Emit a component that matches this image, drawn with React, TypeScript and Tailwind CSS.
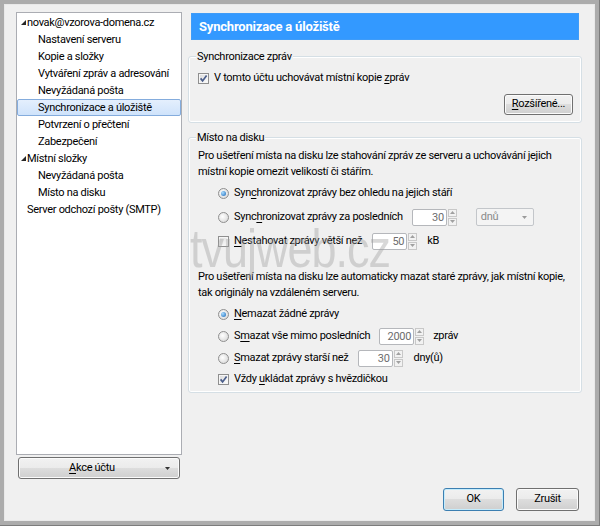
import React from "react";

const Check = ({ checked }: { checked?: boolean }) => (
  <span className="w-[11px] h-[11px] shrink-0 border border-[#8f8f8f] bg-[linear-gradient(135deg,#d9d9d9,#ffffff)] shadow-[inset_0_0_0_1px_#f6f6f6] flex items-center justify-center">
    {checked && (
      <svg width="9" height="9" viewBox="0 0 9 9">
        <path d="M1.6 4.4 L3.6 6.9 L7.6 1.6" stroke="#4a5d8a" strokeWidth="1.7" fill="none" />
      </svg>
    )}
  </span>
);

const Radio = ({ checked }: { checked?: boolean }) => (
  <span className="w-[11px] h-[11px] shrink-0 rounded-full border border-[#8f8f8f] bg-[radial-gradient(circle_at_40%_40%,#ffffff,#d2d2d2)] flex items-center justify-center">
    {checked && <span className="w-[5px] h-[5px] rounded-full bg-[radial-gradient(circle_at_35%_35%,#a8dcff,#1766b8)]" />}
  </span>
);

const Spin = ({ value }: { value: string }) => (
  <div className="flex items-center gap-[1px]">
    <div className="h-[17px] w-[35px] border border-[#b5b7bb] rounded-[2px] bg-white text-right pr-[2px] text-[#6d6d6d] leading-[15px]">{value}</div>
    <div className="flex flex-col gap-[1px]">
      <span className="w-[9px] h-[8px] border border-[#c8c8c8] bg-[#f2f2f2] flex items-center justify-center">
        <svg width="5" height="3" viewBox="0 0 5 3"><path d="M0 3 L2.5 0 L5 3 Z" fill="#a0a0a0" /></svg>
      </span>
      <span className="w-[9px] h-[8px] border border-[#c8c8c8] bg-[#f2f2f2] flex items-center justify-center">
        <svg width="5" height="3" viewBox="0 0 5 3"><path d="M0 0 L2.5 3 L5 0 Z" fill="#a0a0a0" /></svg>
      </span>
    </div>
  </div>
);

const btn =
  "rounded-[3px] border border-[#707070] bg-[linear-gradient(#f2f2f2_0%,#ebebeb_50%,#dddddd_50%,#cfcfcf_100%)] shadow-[inset_0_0_0_1px_#fbfbfb] flex items-center justify-center text-black";

const Tri = () => (
  <svg width="5" height="5" viewBox="0 0 5 5" className="shrink-0">
    <path d="M5 0 L5 5 L0 5 Z" fill="#262626" />
  </svg>
);

export default function App() {
  const tree: { label: string; level: number; exp?: boolean; sel?: boolean }[] = [
    { label: "novak@vzorova-domena.cz", level: 0, exp: true },
    { label: "Nastavení serveru", level: 1 },
    { label: "Kopie a složky", level: 1 },
    { label: "Vytváření zpráv a adresování", level: 1 },
    { label: "Nevyžádaná pošta", level: 1 },
    { label: "Synchronizace a úložiště", level: 1, sel: true },
    { label: "Potvrzení o přečtení", level: 1 },
    { label: "Zabezpečení", level: 1 },
    { label: "Místní složky", level: 0, exp: true },
    { label: "Nevyžádaná pošta", level: 1 },
    { label: "Místo na disku", level: 1 },
    { label: "Server odchozí pošty (SMTP)", level: 0 },
  ];

  return (
    <div className="relative w-[600px] h-[526px] bg-[#acacac] border-r border-b border-[#7c7c7c] pt-[4px] pl-[4px] pr-[4px] pb-[4px] font-['Roboto','Liberation_Sans',sans-serif] text-[11px] tracking-[-0.3px] text-black whitespace-nowrap">
      <div className="h-full border border-[#e9e9e9] bg-[#f0f0f0] flex gap-[6px] pt-[7px] pl-[11px] pr-[11px]">
        {/* left column */}
        <div className="w-[166px] flex flex-col">
          <div className="h-[443px] border border-[#abadb3] bg-white pt-[1px]">
            {tree.map((t, i) => (
              <div
                key={i}
                className={
                  "h-[17px] flex items-center leading-[17px] " +
                  (t.sel
                    ? "rounded-[2px] border border-[#84acdd] bg-[linear-gradient(#e4effd,#cfe3fb)]"
                    : "border border-transparent")
                }
              >
                {t.level === 0 ? (
                  <span className="flex items-center">
                    <span className="w-[8px] flex justify-end">{t.exp && <Tri />}</span>
                    <span className="pl-[1px]">{t.label}</span>
                  </span>
                ) : (
                  <span className="pl-[20px]">{t.label}</span>
                )}
              </div>
            ))}
          </div>
          <div className={"mt-[2px] ml-[2px] w-[162px] h-[22px] " + btn + " !justify-start"}>
            <span className="flex-1 text-center">
              <u className="underline-offset-2">A</u>kce účtu
            </span>
            <svg width="5" height="3" viewBox="0 0 5 3" className="mr-[9px]"><path d="M0 0 L2.5 3 L5 0 Z" fill="#333" /></svg>
          </div>
        </div>

        {/* right column */}
        <div className="w-[394px] flex flex-col">
          <div className="mt-[1px] mx-[3px] h-[27px] bg-[#3399ff] border border-[#3f9cf8] flex items-center pl-[7px] text-white font-bold text-[13px] tracking-[-0.2px]">
            Synchronizace a úložiště
          </div>

          {/* group 1 */}
          <div className="relative mt-[16px] h-[67px] rounded-[3px] border border-[#d5dfe5] shadow-[inset_0_0_0_1px_#ffffff] pl-[9px] pr-[8px] pt-[14px]">
            <span className="absolute -top-[8px] left-[7px] px-[1px] bg-[#f0f0f0] leading-[15px]">Synchronizace zpráv</span>
            <div className="h-[14px] flex items-center gap-[5px]">
              <Check checked />
              <span>
                V tomto účtu uchovávat místní kopie <u className="underline-offset-2">z</u>práv
              </span>
            </div>
            <div className="mt-[9px] flex justify-end">
              <div className={"w-[69px] h-[21px] " + btn}>
                <span>
                  <u className="underline-offset-2">R</u>ozšířené...
                </span>
              </div>
            </div>
          </div>

          {/* group 2 */}
          <div className="relative mt-[14px] h-[256px] rounded-[3px] border border-[#d5dfe5] shadow-[inset_0_0_0_1px_#ffffff] pl-[9px] pr-[8px] pt-[10px]">
            <span className="absolute -top-[8px] left-[7px] px-[1px] bg-[#f0f0f0] leading-[15px]">Místo na disku</span>
            <p className="leading-[16px]">
              Pro ušetření místa na disku lze stahování zpráv ze serveru a uchovávání jejich
              <br />
              místní kopie omezit velikostí či stářím.
            </p>
            <div className="mt-[1px] pl-[20px]">
              <div className="h-[24px] flex items-center gap-[5px]">
                <Radio checked />
                <span>
                  Syn<u className="underline-offset-2">c</u>hronizovat zprávy bez ohledu na jejich stáří
                </span>
              </div>
              <div className="h-[24px] flex items-center gap-[5px]">
                <Radio />
                <span>
                  Sync<u className="underline-offset-2">h</u>ronizovat zprávy za posledních
                </span>
                <span className="ml-[4px]">
                  <Spin value="30" />
                </span>
                <div className="ml-[14px] h-[18px] w-[58px] rounded-[2px] border border-[#c3c6ca] bg-[#f4f4f4] flex items-center justify-between pl-[4px] pr-[6px] text-[#8a8a8a]">
                  <span>dnů</span>
                  <svg width="5" height="3" viewBox="0 0 5 3"><path d="M0 0 L2.5 3 L5 0 Z" fill="#9a9a9a" /></svg>
                </div>
              </div>
              <div className="h-[24px] flex items-center gap-[5px]">
                <Check />
                <span>
                  <u className="underline-offset-2">N</u>estahovat zprávy větší než
                </span>
                <span className="ml-[5px]">
                  <Spin value="50" />
                </span>
                <span className="ml-[5px]">kB</span>
              </div>
            </div>
            <p className="mt-[16px] leading-[16px]">
              Pro ušetření místa na disku lze automaticky mazat staré zprávy, jak místní kopie,
              <br />
              tak originály na vzdáleném serveru.
            </p>
            <div className="mt-[3px] pl-[20px]">
              <div className="h-[21px] flex items-center gap-[5px]">
                <Radio checked />
                <span>
                  <u className="underline-offset-2">N</u>emazat žádné zprávy
                </span>
              </div>
              <div className="h-[22px] flex items-center gap-[5px]">
                <Radio />
                <span>
                  S<u className="underline-offset-2">m</u>azat vše mimo posledních
                </span>
                <span className="ml-[4px]">
                  <Spin value="2000" />
                </span>
                <span className="ml-[4px]">zpráv</span>
              </div>
              <div className="h-[22px] flex items-center gap-[5px]">
                <Radio />
                <span>
                  <u className="underline-offset-2">S</u>mazat zprávy starší než
                </span>
                <span className="ml-[4px]">
                  <Spin value="30" />
                </span>
                <span className="ml-[6px]">dny(ů)</span>
              </div>
              <div className="h-[21px] flex items-center gap-[5px]">
                <Check checked />
                <span>
                  Vždy <u className="underline-offset-2">u</u>kládat zprávy s hvězdičkou
                </span>
              </div>
            </div>
          </div>

          <div className="mt-[95px] mr-[3px] flex justify-end gap-[12px]">
            <div className={"w-[61px] h-[23px] " + btn + " !border-[#3c7fb1] !shadow-[inset_0_0_0_1px_#c5ecfc]"}>OK</div>
            <div className={"w-[63px] h-[23px] " + btn}>Zrušit</div>
          </div>
        </div>
      </div>

      <span className="pointer-events-none absolute left-[190px] top-[221px] origin-top-left scale-y-[1.2] text-[45px] tracking-[-1px] leading-none text-[#a0a0a0] opacity-40 font-['Liberation_Sans',sans-serif]">
        tvujweb.cz
      </span>
    </div>
  );
}
